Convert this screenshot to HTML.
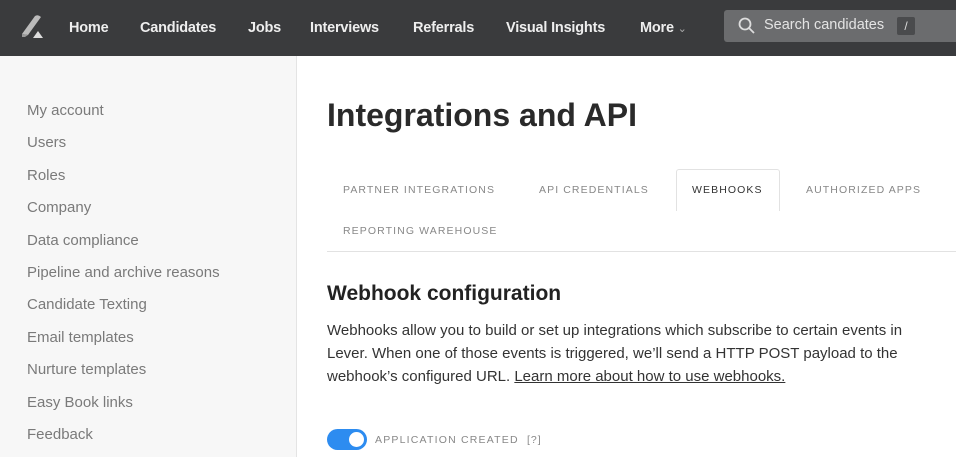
<!DOCTYPE html>
<html><head><style>
*{margin:0;padding:0;box-sizing:border-box}
body{width:956px;height:457px;overflow:hidden;font-family:"Liberation Sans",sans-serif;background:#fff;position:relative}
.nav{position:absolute;left:0;top:0;width:956px;height:56px;background:#3a3b3d}
.nav span{position:absolute;top:20px;color:#eee;font-size:14.5px;font-weight:bold;letter-spacing:-0.2px}
.search{position:absolute;left:724px;top:10px;width:240px;height:32px;background:#6b6c6e;border-radius:3px}
.side{position:absolute;left:0;top:56px;width:297px;height:401px;background:#f7f7f7;border-right:1px solid #e4e4e4}
.side div{position:absolute;left:27px;color:#7a7a7a;font-size:15px}
.tab{position:absolute;font-size:10.5px;letter-spacing:1.1px;color:#888}
</style></head><body>
<div class="nav">
<svg style="position:absolute;left:20px;top:14px" width="26" height="25" viewBox="0 0 26 25"><path d="M2 20 L15 2 Q18 0 21 3 L8 21 Z" fill="#bbb"/><path d="M2 20 L8 21 L5 23 L2 23Z" fill="#999"/><path d="M13 24 L18 17 L23 24Z" fill="#ddd"/></svg>
<span style="left:69px">Home</span><span style="left:140px">Candidates</span><span style="left:248px">Jobs</span><span style="left:310px">Interviews</span><span style="left:413px">Referrals</span><span style="left:506px">Visual Insights</span><span style="left:640px">More <small style="font-weight:normal;color:#aaa;font-size:11px">&#8964;</small></span>
<div class="search"><svg style="position:absolute;left:14px;top:7px" width="18" height="18" viewBox="0 0 18 18"><circle cx="7" cy="7" r="5.5" stroke="#ddd" stroke-width="1.8" fill="none"/><path d="M11 11 L16 16" stroke="#ddd" stroke-width="1.8"/></svg><span style="position:absolute;left:40px;top:7px;color:#e4e4e4;font-size:14.5px;font-weight:normal;letter-spacing:0">Search candidates</span><span style="position:absolute;left:173px;top:7px;width:18px;height:18px;background:#4a4b4d;border-radius:2px;color:#ddd;font-size:12px;text-align:center;line-height:18px;font-weight:normal">/</span></div>
</div>
<div class="side">
<div style="top:46px">My account</div><div style="top:78px">Users</div><div style="top:111px">Roles</div><div style="top:143px">Company</div><div style="top:176px">Data compliance</div><div style="top:208px">Pipeline and archive reasons</div><div style="top:240px">Candidate Texting</div><div style="top:273px">Email templates</div><div style="top:305px">Nurture templates</div><div style="top:338px">Easy Book links</div><div style="top:370px">Feedback</div>
</div>
<div style="position:absolute;left:327px;top:97px;font-size:32px;font-weight:bold;color:#2a2a2a">Integrations and API</div>
<div style="position:absolute;left:676px;top:169px;width:104px;border:1px solid #e2e2e2;border-bottom:none;border-radius:3px 3px 0 0;height:42px;background:#fff"></div>
<div class="tab" style="left:343px;top:184px">PARTNER INTEGRATIONS</div>
<div class="tab" style="left:539px;top:184px">API CREDENTIALS</div>
<div class="tab" style="left:692px;top:184px;color:#333">WEBHOOKS</div>
<div class="tab" style="left:806px;top:184px">AUTHORIZED APPS</div>
<div class="tab" style="left:343px;top:225px">REPORTING WAREHOUSE</div>
<div style="position:absolute;left:327px;top:251px;width:629px;height:1px;background:#e2e2e2"></div>
<div style="position:absolute;left:327px;top:282px;font-size:21px;font-weight:bold;color:#222">Webhook configuration</div>
<div style="position:absolute;left:327px;top:319px;width:620px;font-size:15px;line-height:23px;color:#333">Webhooks allow you to build or set up integrations which subscribe to certain events in Lever. When one of those events is triggered, we’ll send a HTTP POST payload to the webhook’s configured URL. <u>Learn more about how to use webhooks.</u></div>
<div style="position:absolute;left:327px;top:429px;width:40px;height:21px;background:#2d8cf0;border-radius:11px"><div style="position:absolute;right:3px;top:3px;width:15px;height:15px;background:#fff;border-radius:50%"></div></div>
<div class="tab" style="left:375px;top:434px;font-size:10.5px;letter-spacing:1.2px;color:#888">APPLICATION CREATED &nbsp;<span style="letter-spacing:1px">[?]</span></div>
</body></html>
